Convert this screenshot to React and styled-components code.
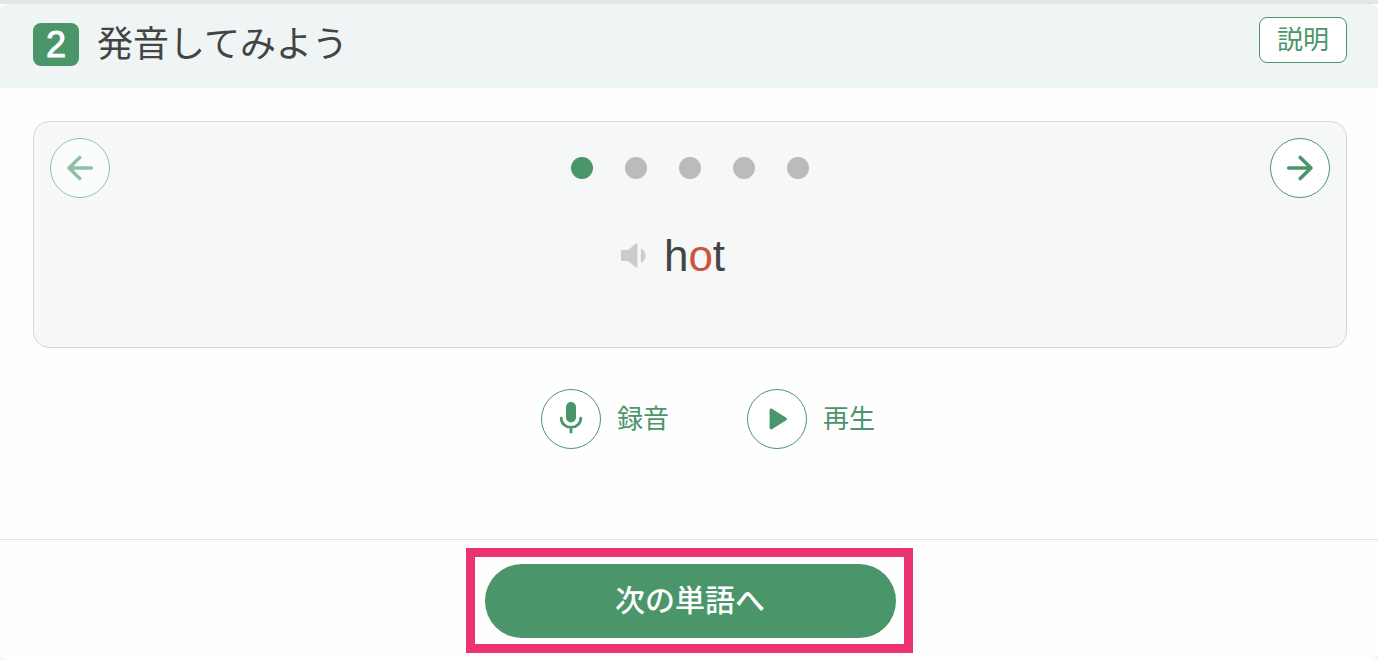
import { useState } from "react";
import styled, { createGlobalStyle } from "styled-components";

const words = [
  { before: "h", accent: "o", after: "t" },
  { before: "b", accent: "o", after: "x" },
  { before: "st", accent: "o", after: "p" },
  { before: "r", accent: "o", after: "ck" },
  { before: "cl", accent: "o", after: "ck" },
];

export default function App() {
  const [index, setIndex] = useState(0);
  const word = words[index];
  const isFirst = index === 0;
  const isLast = index === words.length - 1;

  const goPrev = () => setIndex((i) => Math.max(i - 1, 0));
  const goNext = () => setIndex((i) => Math.min(i + 1, words.length - 1));

  return (
    <>
      <GlobalStyle />
      <Page>
        <Header>
          <Heading>
            <StepNumber>2</StepNumber>
            <Title>発音してみよう</Title>
          </Heading>
          <HelpButton type="button">説明</HelpButton>
        </Header>
        <Main>
          <Card>
            <CardNav>
              <CircleButton
                type="button"
                aria-label="前の単語"
                disabled={isFirst}
                onClick={goPrev}
              >
                <ArrowIcon flip />
              </CircleButton>
              <Dots>
                {words.map((w, i) => (
                  <Dot key={w.before + w.after} $active={i === index} />
                ))}
              </Dots>
              <CircleButton
                type="button"
                aria-label="次の単語"
                disabled={isLast}
                onClick={goNext}
              >
                <ArrowIcon />
              </CircleButton>
            </CardNav>
            <WordRow>
              <SpeakerButton type="button" aria-label="音声を聞く">
                <SpeakerIcon />
              </SpeakerButton>
              <Word>
                {word.before}
                <Accent>{word.accent}</Accent>
                {word.after}
              </Word>
            </WordRow>
          </Card>
          <Controls>
            <ControlButton type="button">
              <Circle>
                <MicIcon />
              </Circle>
              録音
            </ControlButton>
            <ControlButton type="button">
              <Circle>
                <PlayIcon />
              </Circle>
              再生
            </ControlButton>
          </Controls>
        </Main>
        <Footer>
          <Highlight>
            <NextButton type="button" onClick={goNext}>
              次の単語へ
            </NextButton>
          </Highlight>
        </Footer>
      </Page>
    </>
  );
}

function ArrowIcon({ flip }) {
  return (
    <svg width="28" height="28" viewBox="0 0 28 28" fill="none">
      <path
        d={
          flip
            ? "M25.4 14H3M13.8 3.4 3 14l10.8 10.6"
            : "M2.6 14H25M14.2 3.4 25 14 14.2 24.6"
        }
        stroke="currentColor"
        strokeWidth="3.5"
        strokeLinecap="round"
        strokeLinejoin="round"
      />
    </svg>
  );
}

function SpeakerIcon() {
  return (
    <svg width="26" height="26" viewBox="0 0 26 26" fill="currentColor">
      <path d="M1.6 7H7l7.400-6.100c.8-.6 2-.2 2 .9v21.400c0 1.100-1.200 1.500-2 .9L7 18H1.600C.7 18 0 17.300 0 16.400V8.600C0 7.700.7 7 1.600 7Z" />
      <path d="M19.800 5.600c3 1.200 4.900 4 4.900 7.200s-1.900 6-4.900 7.200Z" />
    </svg>
  );
}

function MicIcon() {
  return (
    <svg width="24" height="34" viewBox="0 0 24 34" fill="none">
      <rect x="7" y="0" width="10" height="20.400" rx="5" fill="currentColor" />
      <path
        d="M2.200 16.200a9.800 9.200 0 0 0 19.600 0M12 25.400v4.800"
        stroke="currentColor"
        strokeWidth="2.800"
        strokeLinecap="round"
      />
    </svg>
  );
}

function PlayIcon() {
  return (
    <svg width="24" height="24" viewBox="0 0 24 24" fill="currentColor">
      <path d="M4.600 3v18c0 1.200 1.300 1.900 2.300 1.200l14.300-9c.9-.6.900-1.800 0-2.400L6.900 1.800C5.900 1.100 4.600 1.800 4.600 3Z" />
    </svg>
  );
}

const GlobalStyle = createGlobalStyle`
  * {
    box-sizing: border-box;
  }
  body {
    margin: 0;
    background: #f1f5f4;
    color: #444;
    font-family: "Liberation Sans", "Noto Sans CJK JP", sans-serif;
  }
  button {
    padding: 0;
    border: none;
    background: none;
    color: inherit;
    font-family: inherit;
    line-height: 1;
    cursor: pointer;
  }
  svg {
    display: block;
  }
`;

const Page = styled.div`
  min-height: 100vh;
  display: flex;
  flex-direction: column;
  border-top: 4px solid #e5e5e5;
  border-radius: 0 0 8px 8px;
  background: #fefefe;
`;

const Header = styled.header`
  display: flex;
  justify-content: space-between;
  align-items: flex-start;
  min-height: 84px;
  padding: 13px 31px 12px 33px;
  border-radius: 8px 8px 0 0;
  background: #eff4f4;
`;

const Heading = styled.div`
  display: flex;
  align-items: center;
  gap: 18px;
  padding-top: 6px;
`;

const StepNumber = styled.span`
  display: flex;
  justify-content: center;
  align-items: center;
  width: 46px;
  height: 43px;
  border-radius: 8px;
  background: #4a956a;
  color: #fff;
  font-size: 36px;
  line-height: 43px;
  -webkit-text-stroke: 1px #fff;
`;

const Title = styled.h1`
  margin: 0;
  font-size: 36px;
  font-weight: 400;
  line-height: 43px;
`;

const HelpButton = styled.button`
  height: 46px;
  padding: 0 17px;
  border: 1px solid #4a956a;
  border-radius: 8px;
  background: #fff;
  color: #4a956a;
  font-size: 26px;
`;

const Main = styled.main`
  flex: 1;
  padding: 33px 31px 33px 33px;
`;

const Card = styled.section`
  min-height: 227px;
  padding: 16px;
  border: 1px solid #d6d8d7;
  border-radius: 16px;
  background: #f5f8f7;
`;

const CardNav = styled.div`
  display: flex;
  justify-content: space-between;
  align-items: center;
`;

const Circle = styled.span`
  display: flex;
  justify-content: center;
  align-items: center;
  width: 60px;
  height: 60px;
  border: 1px solid #4a956a;
  border-radius: 50%;
  background: #fff;
  color: #4a956a;
`;

const CircleButton = styled(Circle).attrs({ as: "button" })`
  &:disabled {
    border-color: #94c3a8;
    background: #fbfdfc;
    color: #8fbfa4;
    cursor: default;
  }
`;

const Dots = styled.div`
  display: flex;
  gap: 32px;
`;

const Dot = styled.span`
  width: 22px;
  height: 22px;
  border-radius: 50%;
  background: ${({ $active }) => ($active ? "#4a956a" : "#bbb")};
`;

const WordRow = styled.div`
  display: flex;
  justify-content: center;
  align-items: center;
  gap: 17px;
  margin-top: 32px;
  padding-right: 34px;
`;

const SpeakerButton = styled.button`
  color: #ccc;
`;

const Word = styled.p`
  margin: 0;
  font-size: 44px;
  line-height: 52px;
`;

const Accent = styled.span`
  color: #cb553f;
`;

const Controls = styled.div`
  display: flex;
  justify-content: center;
  gap: 78px;
  margin-top: 41px;
  padding-left: 36px;
`;

const ControlButton = styled.button`
  display: flex;
  align-items: center;
  gap: 16px;
  color: #4a956a;
  font-size: 26px;
`;

const Footer = styled.footer`
  display: flex;
  justify-content: center;
  padding: 8px 0 7px;
  border-top: 1px solid #e2e2e2;
`;

const Highlight = styled.div`
  padding: 7px 8px 6px 10px;
  border: 9px solid #eb346f;
`;

const NextButton = styled.button`
  width: 411px;
  height: 74px;
  border-radius: 37px;
  background: #4a956a;
  color: #fff;
  font-size: 30px;
  font-weight: 500;
`;
